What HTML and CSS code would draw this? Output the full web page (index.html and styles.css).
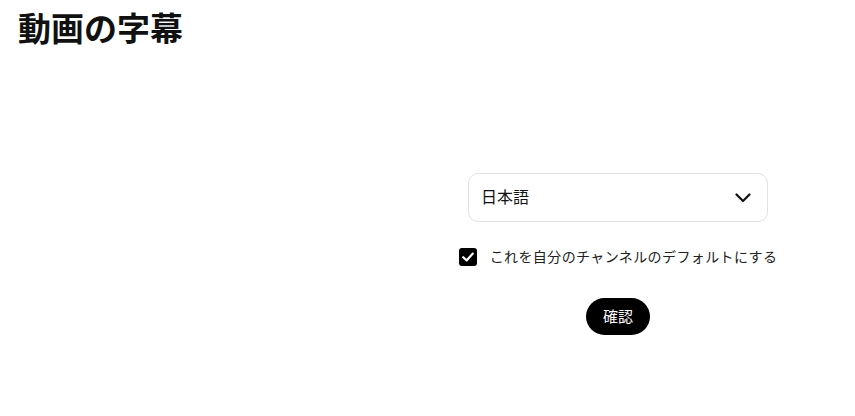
FILE: index.html
```html
<!DOCTYPE html>
<html lang="ja">
<head>
<meta charset="utf-8">
<title>動画の字幕</title>
<link rel="stylesheet" href="styles.css">
</head>
<body>
<div class="page">
  <h1 class="title">動画の字幕</h1>
  <div class="layout">
    <div class="left"></div>
    <div class="panel">
      <div class="select">
        <span class="select-value">日本語</span>
        <svg class="chevron" width="16" height="10" viewBox="0 0 16 10" aria-hidden="true"><path d="M1.5 1.5 L8 8 L14.5 1.5" fill="none" stroke="#111" stroke-width="2.2" stroke-linecap="round" stroke-linejoin="round"/></svg>
      </div>
      <label class="check-row">
        <span class="checkbox">
          <svg width="18" height="18" viewBox="0 0 18 18" aria-hidden="true"><path d="M4.2 9.2 L7.6 12.4 L13.8 5.6" fill="none" stroke="#fff" stroke-width="2.2" stroke-linecap="round" stroke-linejoin="round"/></svg>
        </span>
        <span class="check-label">これを自分のチャンネルのデフォルトにする</span>
      </label>
      <div class="actions">
        <button class="confirm" type="button">確認</button>
      </div>
    </div>
  </div>
</div>
</body>
</html>
```
FILE: styles.css
```css
* { box-sizing: border-box; }
html, body { margin: 0; padding: 0; background: #fff; }
body {
  font-family: "Noto Sans CJK JP", "Noto Sans", sans-serif;
  color: #111;
}
.page {
  padding: 7px 16px 0 18px;
}
.title {
  margin: 0;
  font-size: 33px;
  font-weight: 700;
  line-height: 40px;
  color: #111;
}
.layout {
  display: grid;
  grid-template-columns: 1fr 420px;
  padding-right: 11px;
}
.panel {
  padding-top: 126px;
  display: flex;
  flex-direction: column;
  align-items: center;
}
.select {
  width: 300px;
  height: 49px;
  border: 1px solid #e2e2e2;
  border-radius: 10px;
  display: flex;
  align-items: center;
  justify-content: space-between;
  padding: 0 16px 0 12px;
}
.select-value {
  font-size: 16px;
  line-height: 20px;
  padding-bottom: 4px;
  color: #111;
}
.chevron { display: block; }
.check-row {
  margin-top: 25px;
  display: flex;
  align-items: center;
  gap: 13px;
}
.checkbox {
  width: 18px;
  height: 18px;
  background: #000;
  border-radius: 3px;
  display: flex;
}
.check-label {
  font-size: 14px;
  letter-spacing: 0.4px;
  line-height: 18px;
  padding-bottom: 2px;
  color: #222;
}
.actions {
  margin-top: 31px;
}
.confirm {
  height: 37px;
  padding: 0 17px;
  border: none;
  border-radius: 999px;
  background: #000;
  color: #fff;
  font-family: "Noto Sans CJK JP", "Noto Sans", sans-serif;
  font-size: 15px;
  line-height: 20px;
  padding-bottom: 2px;
  cursor: pointer;
}
```
